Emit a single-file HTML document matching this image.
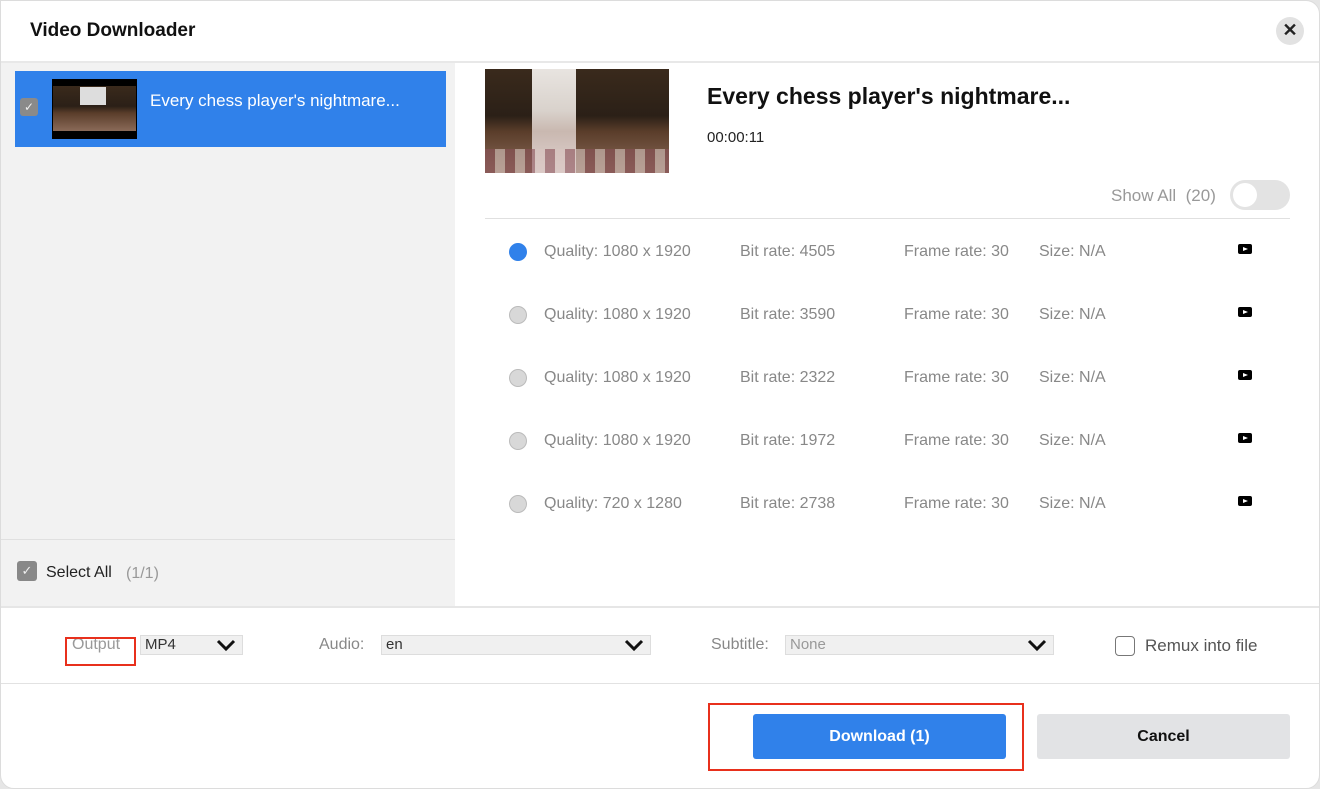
<!DOCTYPE html>
<html><head><meta charset="utf-8"><style>
*{box-sizing:border-box;margin:0;padding:0}
body{width:1320px;height:789px;background:#e6e6e6;font-family:"Liberation Sans",sans-serif;position:relative;overflow:hidden}
.win{position:absolute;left:0;top:0;width:1320px;height:789px;background:#fff;border:1px solid #dcdcdc;border-radius:0 14px 14px 14px;overflow:hidden}
.a{position:absolute;white-space:nowrap}
.t{color:#888;font-size:16px}
.rad{position:absolute;width:18px;height:18px;border-radius:50%;background:#d8d8d8;border:1px solid #bbb}
.yt{position:absolute;width:14px;height:10px;background:#000;border-radius:2px}
.yt:after{content:"";position:absolute;left:5px;top:2.5px;border-left:5px solid #fff;border-top:2.5px solid transparent;border-bottom:2.5px solid transparent}
.sel{position:absolute;height:20px;background:#f0f0f0;border:1px solid #ddd;font-size:15px;color:#333;padding-left:4px;line-height:18px;white-space:nowrap}
.chev{position:absolute;right:6px;top:2px}
.thumb{background:linear-gradient(180deg,#3a2a1c 0%,#2b2017 45%,#5a3d2a 60%,#8a6a58 100%)}
</style></head><body>
<div class="win">
 <div class="a" style="left:29px;top:19px;font-size:19px;font-weight:bold;color:#111">Video Downloader</div>
 <div class="a" style="left:1275px;top:16px;width:28px;height:28px;border-radius:50%;background:#e2e2e2;text-align:center;line-height:27px;font-size:18px;font-weight:bold;color:#222">✕</div>
 <div class="a" style="left:0;top:60px;width:1320px;height:2px;background:#e8e8e8"></div>
 <div class="a" style="left:0;top:62px;width:454px;height:543px;background:#f2f2f2"></div>
 <div class="a" style="left:14px;top:70px;width:431px;height:76px;background:#3081ea"></div>
 <div class="a" style="left:19px;top:97px;width:18px;height:18px;background:#8a8a8a;border-radius:3px;color:#eee;font-size:12px;text-align:center;line-height:18px">✓</div>
 <div class="a" style="left:51px;top:78px;width:85px;height:60px;background:#000"><div class="a thumb" style="left:1px;top:7px;width:83px;height:45px"></div><div class="a" style="left:28px;top:8px;width:26px;height:18px;background:#ddd"></div></div>
 <div class="a" style="left:149px;top:90px;font-size:17px;color:#fff">Every chess player's nightmare...</div>
 <div class="a" style="left:0;top:538px;width:454px;height:1px;background:#e0e0e0"></div>
 <div class="a" style="left:16px;top:560px;width:20px;height:20px;background:#888;border-radius:3px;color:#eee;font-size:13px;text-align:center;line-height:20px">✓</div>
 <div class="a" style="left:45px;top:563px;font-size:16px;color:#222">Select All</div>
 <div class="a" style="left:125px;top:564px;font-size:16px;color:#999">(1/1)</div>
 <div class="a thumb" style="left:484px;top:68px;width:184px;height:104px"><div class="a" style="left:47px;top:0;width:44px;height:104px;background:linear-gradient(#e8e4e0 0%,#d9d2cc 40%,#c9b8b0 60%,#e0d2d0 100%)"></div><div class="a" style="left:0;top:80px;width:184px;height:24px;background:repeating-linear-gradient(90deg,#8a5058 0 10px,#d8c4c0 10px 20px);opacity:.6"></div></div>
 <div class="a" style="left:706px;top:82px;font-size:23px;font-weight:bold;color:#111">Every chess player's nightmare...</div>
 <div class="a" style="left:706px;top:128px;font-size:15px;color:#222">00:00:11</div>
 <div class="a" style="left:1110px;top:185px;font-size:17px;color:#999">Show All&nbsp; (20)</div>
 <div class="a" style="left:1229px;top:179px;width:60px;height:30px;border-radius:15px;background:#e3e3e3"><div class="a" style="left:3px;top:3px;width:24px;height:24px;border-radius:50%;background:#fff"></div></div>
 <div class="a" style="left:484px;top:217px;width:805px;height:1px;background:#e0e0e0"></div>
 <div class="rad" style="left:508px;top:242px;background:#3081ea;border-color:#3081ea"></div>
 <div class="a t" style="left:543px;top:242px">Quality: 1080 x 1920</div><div class="a t" style="left:739px;top:242px">Bit rate: 4505</div><div class="a t" style="left:903px;top:242px">Frame rate: 30</div><div class="a t" style="left:1038px;top:242px">Size: N/A</div><div class="yt" style="left:1237px;top:243px"></div>
 <div class="rad" style="left:508px;top:305px"></div>
 <div class="a t" style="left:543px;top:305px">Quality: 1080 x 1920</div><div class="a t" style="left:739px;top:305px">Bit rate: 3590</div><div class="a t" style="left:903px;top:305px">Frame rate: 30</div><div class="a t" style="left:1038px;top:305px">Size: N/A</div><div class="yt" style="left:1237px;top:306px"></div>
 <div class="rad" style="left:508px;top:368px"></div>
 <div class="a t" style="left:543px;top:368px">Quality: 1080 x 1920</div><div class="a t" style="left:739px;top:368px">Bit rate: 2322</div><div class="a t" style="left:903px;top:368px">Frame rate: 30</div><div class="a t" style="left:1038px;top:368px">Size: N/A</div><div class="yt" style="left:1237px;top:369px"></div>
 <div class="rad" style="left:508px;top:431px"></div>
 <div class="a t" style="left:543px;top:431px">Quality: 1080 x 1920</div><div class="a t" style="left:739px;top:431px">Bit rate: 1972</div><div class="a t" style="left:903px;top:431px">Frame rate: 30</div><div class="a t" style="left:1038px;top:431px">Size: N/A</div><div class="yt" style="left:1237px;top:432px"></div>
 <div class="rad" style="left:508px;top:494px"></div>
 <div class="a t" style="left:543px;top:494px">Quality: 720 x 1280</div><div class="a t" style="left:739px;top:494px">Bit rate: 2738</div><div class="a t" style="left:903px;top:494px">Frame rate: 30</div><div class="a t" style="left:1038px;top:494px">Size: N/A</div><div class="yt" style="left:1237px;top:495px"></div>
 <div class="a" style="left:0;top:605px;width:1320px;height:2px;background:#e6e6e6"></div>
 <div class="a t" style="left:71px;top:635px;color:#999">Output</div>
 <div class="a" style="left:64px;top:636px;width:71px;height:29px;border:2px solid #e8301c"></div>
 <div class="sel" style="left:139px;top:634px;width:103px">MP4<svg class="chev" width="20" height="14" viewBox="0 0 20 14"><path d="M2 3l8 8 8-8" stroke="#111" stroke-width="3" fill="none"/></svg></div>
 <div class="a t" style="left:318px;top:635px">Audio:</div>
 <div class="sel" style="left:380px;top:634px;width:270px">en<svg class="chev" width="20" height="14" viewBox="0 0 20 14"><path d="M2 3l8 8 8-8" stroke="#111" stroke-width="3" fill="none"/></svg></div>
 <div class="a t" style="left:710px;top:635px">Subtitle:</div>
 <div class="sel" style="left:784px;top:634px;width:269px;color:#999">None<svg class="chev" width="20" height="14" viewBox="0 0 20 14"><path d="M2 3l8 8 8-8" stroke="#111" stroke-width="3" fill="none"/></svg></div>
 <div class="a" style="left:1114px;top:635px;width:20px;height:20px;border:1.5px solid #777;border-radius:4px"></div>
 <div class="a" style="left:1144px;top:635px;font-size:17px;color:#555">Remux into file</div>
 <div class="a" style="left:0;top:682px;width:1320px;height:1px;background:#e2e2e2"></div>
 <div class="a" style="left:707px;top:702px;width:316px;height:68px;border:2px solid #e8301c"></div>
 <div class="a" style="left:752px;top:713px;width:253px;height:45px;background:#3081ea;border-radius:3px;color:#fff;font-weight:bold;font-size:16px;text-align:center;line-height:45px">Download (1)</div>
 <div class="a" style="left:1036px;top:713px;width:253px;height:45px;background:#e2e3e5;border-radius:3px;color:#111;font-weight:bold;font-size:16px;text-align:center;line-height:45px">Cancel</div>
</div>
</body></html>
